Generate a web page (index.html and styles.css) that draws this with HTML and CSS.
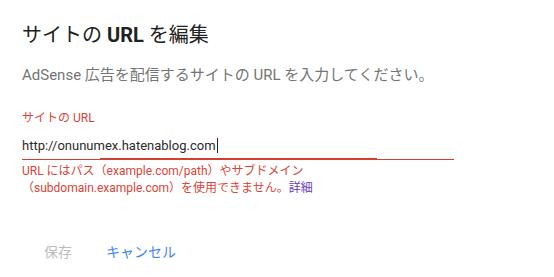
FILE: index.html
```html
<!DOCTYPE html>
<html lang="ja">
<head>
<meta charset="utf-8">
<title>サイトの URL を編集</title>
<link rel="stylesheet" href="styles.css">
</head>
<body>
<div class="dialog">
  <h1 class="title">サイトの <b>URL</b> を編集</h1>
  <p class="desc">AdSense 広告を配信するサイトの URL を入力してください。</p>
  <div class="field">
    <label class="label">サイトの URL</label>
    <div class="input"><span class="value">http://onunumex.hatenablog.com</span><span class="caret"></span><span class="focus-bar"></span></div>
    <div class="error">URL にはパス（example.com/path）やサブドメイン<br>（subdomain.example.com）を使用できません。<a class="more" href="#">詳細</a></div>
  </div>
  <div class="actions">
    <span class="btn btn-disabled">保存</span>
    <span class="btn btn-primary">キャンセル</span>
  </div>
</div>
</body>
</html>
```
FILE: styles.css
```css
html, body {
  margin: 0;
  padding: 0;
  background: #ffffff;
}
body {
  font-family: Roboto, "Noto Sans CJK JP", sans-serif;
  color: #212121;
}
.dialog {
  padding: 21px 0 0 22px;
  width: 432px;
}
.title {
  margin: 0;
  font-size: 20px;
  line-height: 28px;
  font-weight: 400;
  color: #212121;
}
.title b {
  font-weight: 700;
}
.desc {
  margin: 16px 0 0;
  font-size: 15px;
  line-height: 20px;
  color: #757575;
}
.field {
  margin-top: 25px;
}
.label {
  display: block;
  font-size: 12px;
  line-height: 16px;
  color: #db4437;
}
.input {
  position: relative;
  display: flex;
  align-items: center;
  padding: 5px 0 0;
  border-bottom: 1px solid #d23f31;
  box-sizing: border-box;
  height: 34px;
  font-size: 13px;
  color: #2b2b2b;
}
.caret {
  display: inline-block;
  width: 1px;
  height: 15px;
  background: #212121;
  margin-left: 1px;
}
.focus-bar {
  position: absolute;
  left: 78px;
  width: 277px;
  bottom: -1px;
  height: 2px;
  background: #d23f31;
}
.error {
  margin-top: 3px;
  font-size: 12px;
  line-height: 17px;
  color: #db4437;
}
.more {
  color: #673ab7;
  text-decoration: none;
}
.actions {
  display: flex;
  gap: 34px;
  margin-top: 45px;
  padding-left: 22px;
}
.btn {
  font-size: 14px;
  line-height: 20px;
}
.btn-disabled {
  color: #bdbdbd;
}
.btn-primary {
  color: #4285f4;
}
```
